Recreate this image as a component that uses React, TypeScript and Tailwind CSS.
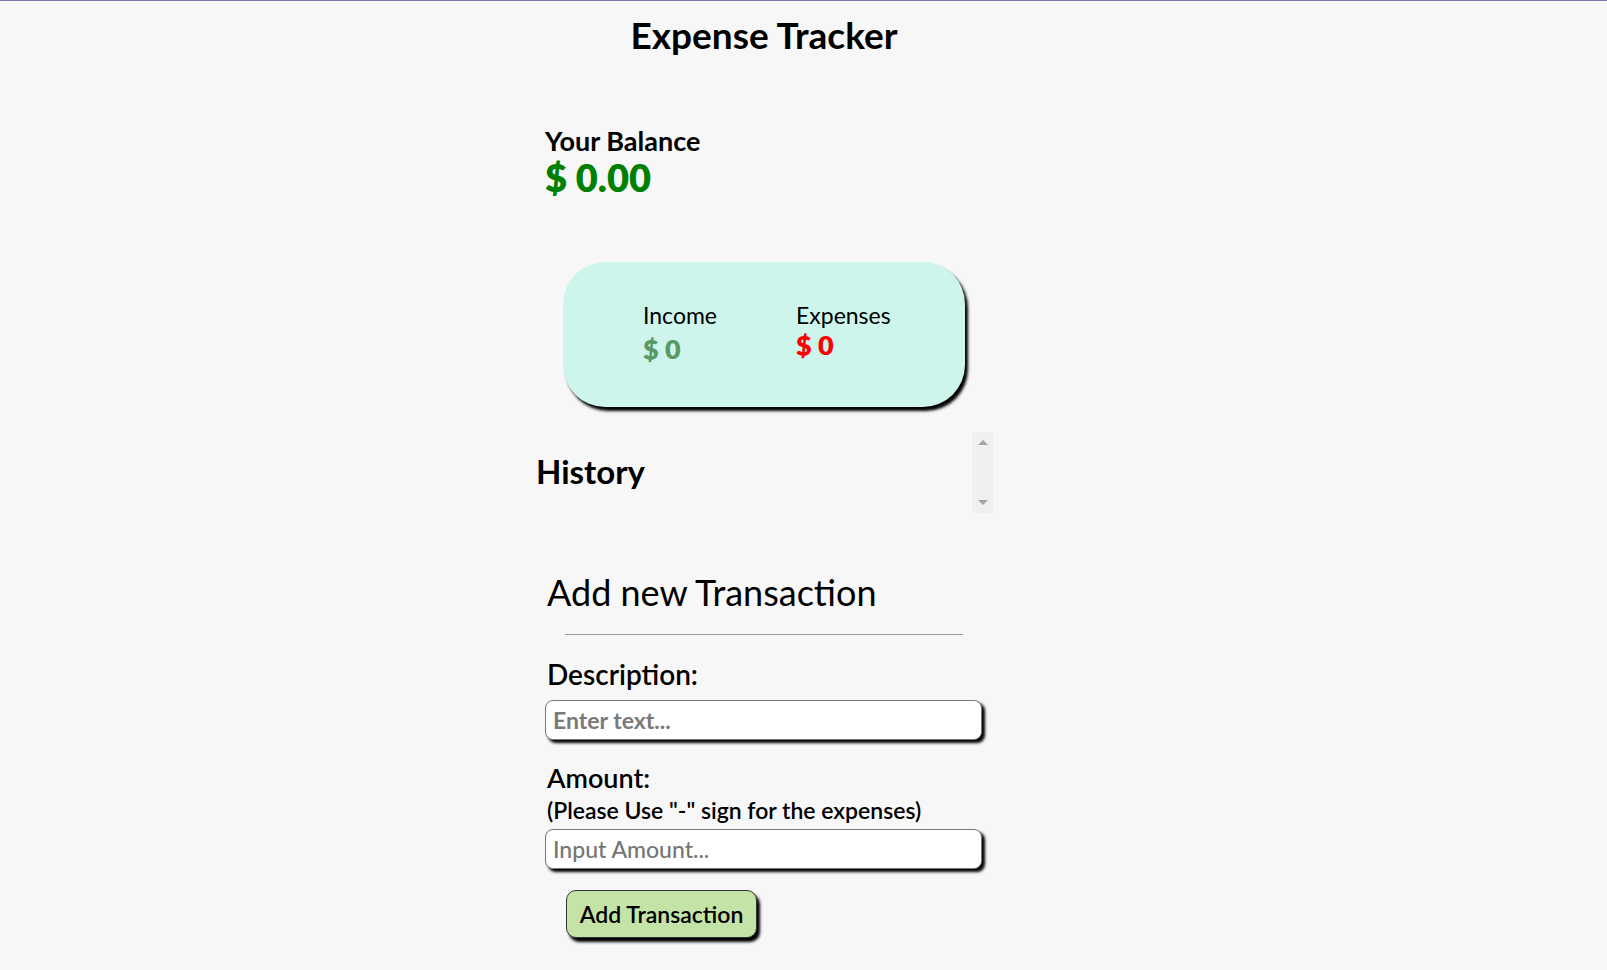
import React from 'react'

const font = { fontFamily: 'Lato, "Noto Sans", sans-serif' }

export default function App() {
  return (
    <div className="min-h-screen bg-[#f7f7f7] border-t border-[#7b74a8] text-black" style={font}>
      <div className="ml-[545px] w-[438px] flex flex-col">
        {/* Title */}
        <h1 className="mt-[15px] text-center text-[37px] font-bold leading-none">Expense Tracker</h1>

        {/* Balance */}
        <h4 className="mt-[74px] text-[27px] font-bold leading-none">Your Balance</h4>
        <div className="mt-[4px] text-[38px] font-extrabold leading-none text-[#008000]">$ 0.00</div>

        {/* Income / Expenses card */}
        <div className="mt-[66px] ml-[18px] w-[402px] h-[145px] rounded-[42px] bg-[#cdf5ec] shadow-[3px_4px_3px_#000] flex pt-[42px] pl-[80px]">
          <div className="w-[153px]">
            <div className="text-[23px] leading-none">Income</div>
            <div className="mt-[8px] text-[27px] font-extrabold leading-none text-[#5b9a66]">$ 0</div>
          </div>
          <div>
            <div className="text-[23px] leading-none">Expenses</div>
            <div className="mt-[4px] text-[27px] font-extrabold leading-none text-[#ff0000]">$ 0</div>
          </div>
        </div>

        {/* History */}
        <div className="mt-[25px] -ml-[9px] -mr-[10px] h-[81px] flex justify-between">
          <h3 className="mt-[23px] text-[33px] font-bold leading-none">History</h3>
          <div className="w-[21px] h-[81px] bg-[#f0f0f0] flex flex-col items-center justify-between py-[8px]">
            <div className="w-0 h-0 border-l-[5px] border-r-[5px] border-b-[5px] border-l-transparent border-r-transparent border-b-[#a3a3a3]" />
            <div className="w-0 h-0 border-l-[5px] border-r-[5px] border-t-[5px] border-l-transparent border-r-transparent border-t-[#a3a3a3]" />
          </div>
        </div>

        {/* Add transaction */}
        <h3 className="mt-[61px] ml-[2px] text-[36px] leading-none">Add new Transaction</h3>
        <div className="mt-[24px] ml-[20px] w-[398px] border-t border-[#999]" />

        <form className="flex flex-col">
          <label className="mt-[25px] ml-[2px] text-[28px] font-semibold leading-none">Description:</label>
          <input
            type="text"
            placeholder="Enter text..."
            className="mt-[12px] w-[437px] h-[40px] rounded-lg border border-[#777] bg-white px-[7px] text-[23px] font-bold shadow-[3px_3px_3px_#000] outline-none placeholder:text-[#7a7a7a]"
          />
          <label className="mt-[24px] ml-[2px] text-[27px] font-semibold leading-none">Amount:</label>
          <div className="mt-[8px] ml-[2px] text-[23px] font-semibold leading-none">(Please Use "-" sign for the expenses)</div>
          <input
            type="number"
            placeholder="Input Amount..."
            className="mt-[7px] w-[437px] h-[40px] rounded-lg border border-[#777] bg-white px-[7px] text-[23px] font-medium shadow-[3px_3px_3px_#000] outline-none placeholder:text-[#757575]"
          />
          <button
            type="button"
            className="mt-[21px] ml-[21px] w-[191px] h-[48px] rounded-[10px] border border-[#333] bg-[#c4e4a7] text-[23px] font-semibold shadow-[3px_4px_3px_#000]"
          >
            Add Transaction
          </button>
        </form>
      </div>
    </div>
  )
}
